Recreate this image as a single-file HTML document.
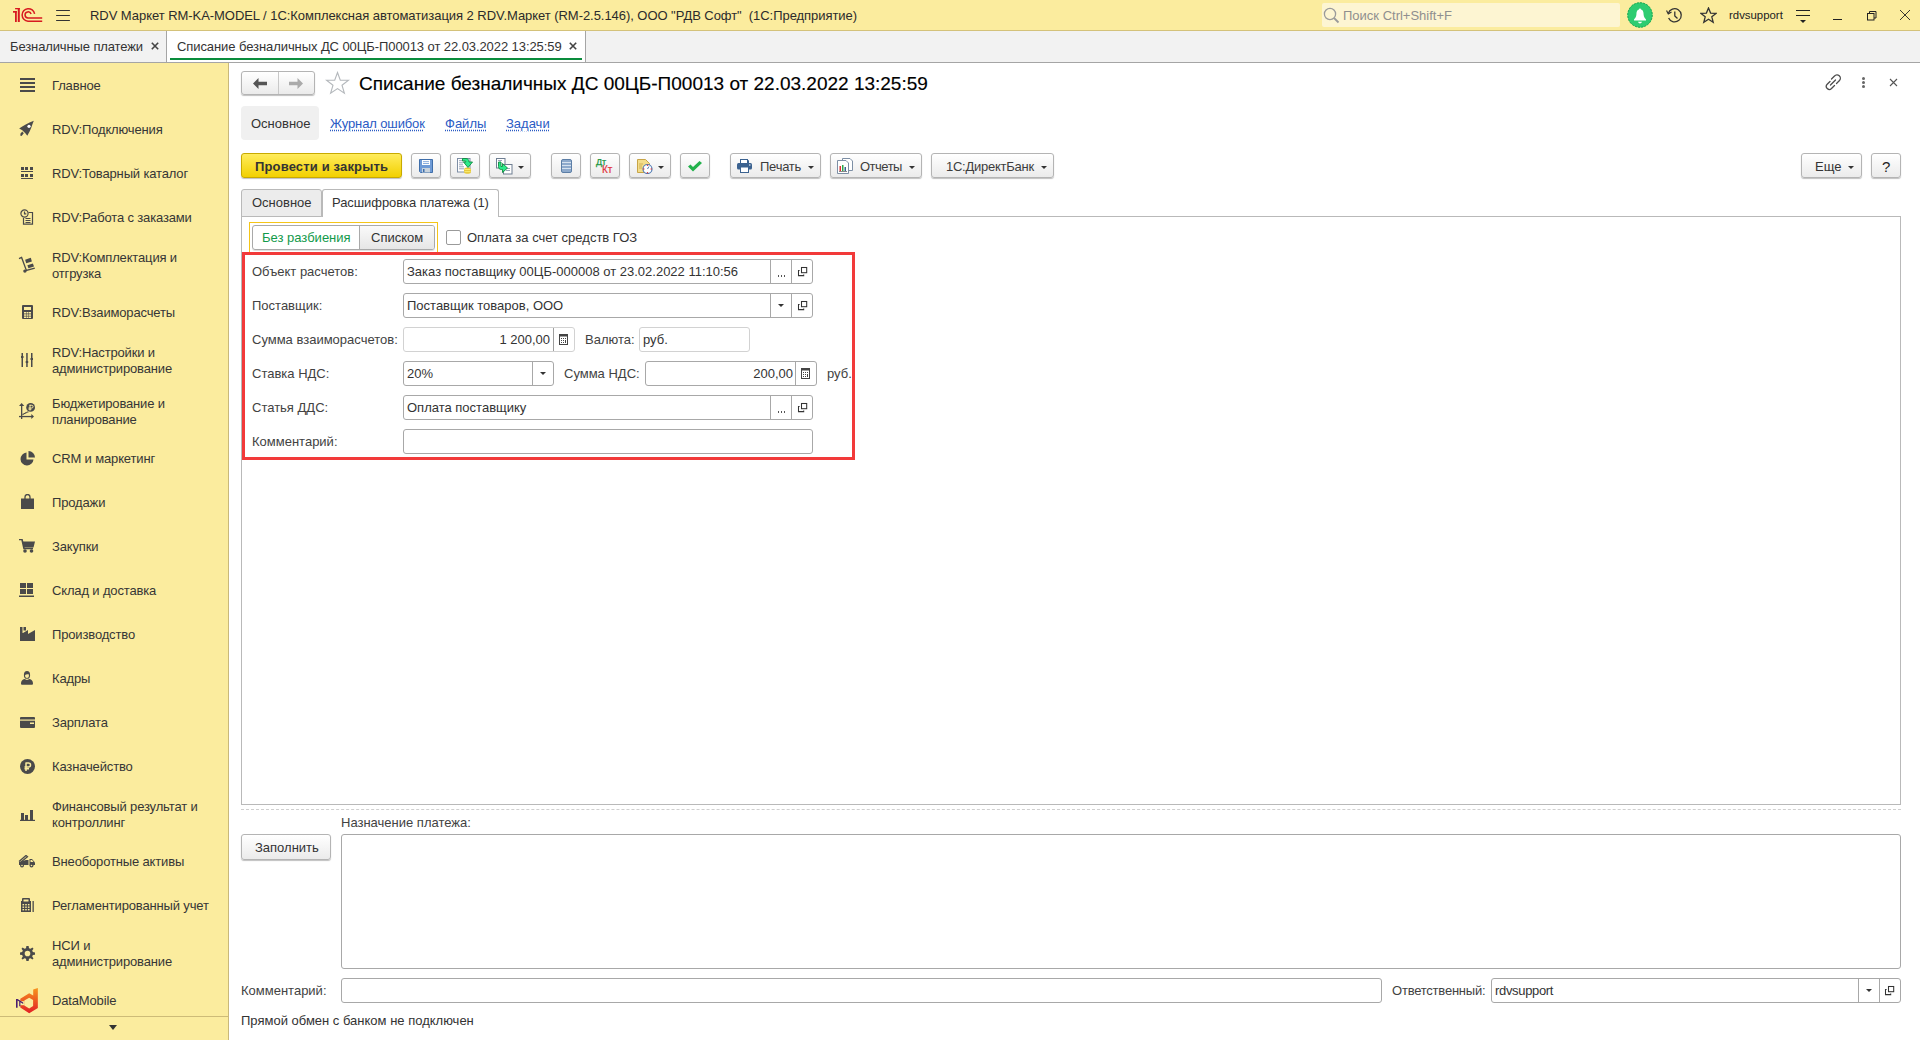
<!DOCTYPE html>
<html><head><meta charset="utf-8">
<style>
*{margin:0;padding:0;box-sizing:border-box}
html,body{width:1920px;height:1040px;overflow:hidden;background:#fff;font-family:"Liberation Sans",sans-serif;font-size:13px;color:#4d4d4d}
.a{position:absolute}
.t{position:absolute;white-space:pre;line-height:16px;font-size:13px}
#hdr{left:0;top:0;width:1920px;height:31px;background:#fbec9e;border-bottom:1px solid #d4c27a}
#tabs{left:0;top:31px;width:1920px;height:32px;background:#f2f2f2;border-bottom:1px solid #a5a5a5}
#side{left:0;top:63px;width:229px;height:977px;background:#fbec9e;border-right:1px solid #c9b87a}
.si{position:absolute;left:52px;white-space:pre;line-height:16px;color:#363636;letter-spacing:-0.15px}
.ic{position:absolute;left:19px;width:17px;height:17px}
.btn{position:absolute;height:26px;border:1px solid #b4b4b4;border-radius:3px;background:linear-gradient(#ffffff,#ebebeb);box-shadow:0 1px 1px rgba(0,0,0,.25)}
.fld{position:absolute;height:25px;border:1px solid #a8a8a8;border-radius:3px;background:#fff}
.lbl{position:absolute;white-space:pre;line-height:16px;color:#424242}
.val{position:absolute;white-space:pre;line-height:16px;color:#333}
.dd{position:absolute;width:0;height:0;border-left:4px solid transparent;border-right:4px solid transparent;border-top:4px solid #4d4d4d}
.lnk{color:#2a5bc4;text-decoration:underline dotted;text-underline-offset:2px}
.ybtn{border:1px solid #c8aa00;border-radius:3px;background:linear-gradient(#ffec5c,#f2d000);box-shadow:0 1px 1px rgba(0,0,0,.25)}
.sep{width:1px;height:23px;background:#a8a8a8}
</style></head><body>

<!-- HEADER -->
<div id="hdr" class="a">
  <svg class="a" style="left:0;top:0" width="50" height="30" viewBox="0 0 50 30"><g fill="#d71920"><rect x="13" y="11" width="3.7" height="1.7"/><rect x="15" y="11" width="1.8" height="11"/><rect x="17.8" y="8" width="2" height="14"/><rect x="15.1" y="8" width="4.7" height="1.3"/></g><g fill="none" stroke="#d71920" stroke-width="1.5"><path d="M34.6 13.8 A6.3 6.3 0 1 0 28 21.25 H42.2"/><path d="M31.1 14 A3.1 3.1 0 1 0 28 18.05 H42.2"/></g></svg>
  <div class="a" style="left:56px;top:10px;width:14px;height:1.2px;background:#333;border-radius:1px"></div>
  <div class="a" style="left:56px;top:15px;width:14px;height:1.2px;background:#333;border-radius:1px"></div>
  <div class="a" style="left:56px;top:20px;width:14px;height:1.2px;background:#333;border-radius:1px"></div>
  <div class="t" style="left:90px;top:8px;color:#2b2b2b;letter-spacing:-0.05px">RDV Маркет RM-KA-MODEL / 1С:Комплексная автоматизация 2 RDV.Маркет (RM-2.5.146), ООО "РДВ Софт"  (1С:Предприятие)</div>
  <div class="a" style="left:1322px;top:3px;width:298px;height:24px;background:#fdf5d2;border-radius:2px"></div>
  <div class="t" style="left:1343px;top:8px;color:#8f8f8f">Поиск Ctrl+Shift+F</div>
  <svg class="a" style="left:1323px;top:7px" width="17" height="17" viewBox="0 0 17 17" fill="none" stroke="#9a9a9a" stroke-width="1.3"><circle cx="7" cy="7" r="5.6"/><path d="M11 11 L15.5 15.5" stroke-width="1.8"/></svg>
  <svg class="a" style="left:1627px;top:2px" width="26" height="26" viewBox="0 0 26 26"><circle cx="13" cy="13" r="12.5" fill="#2ecc71"/><circle cx="13" cy="13" r="12.3" fill="none" stroke="#0f9a44" stroke-width="0.8" stroke-dasharray="2 1.2"/><path d="M13 6.5 A1 1 0 0 1 14 7.6 C16 8 16.6 10 16.6 12.5 C16.6 15 18.5 17 19 17.5 V18.5 H7 V17.5 C7.5 17 9.4 15 9.4 12.5 C9.4 10 10 8 12 7.6 A1 1 0 0 1 13 6.5Z" fill="#fff"/><path d="M11 19.8 H15 C14.6 21 13.8 21.5 13 21.5 C12.2 21.5 11.4 21 11 19.8Z" fill="#fff"/></svg>
  <svg class="a" style="left:1666px;top:7px" width="17" height="17" viewBox="0 0 17 17" fill="none" stroke="#333" stroke-width="1.3"><path d="M2.3 6.5 A6.6 6.6 0 1 1 2.6 11"/><path d="M0.5 3.5 L2.3 7 L5.5 5" stroke-width="1.2"/><path d="M8.8 4.5 V9 L11.5 11.5"/></svg>
  <svg class="a" style="left:1700px;top:7px" width="17" height="17" viewBox="0 0 17 17" fill="none" stroke="#333" stroke-width="1.3" stroke-linejoin="miter"><path d="M8.5 1 L10.6 6.1 L16 6.4 L11.8 9.8 L13.2 15.3 L8.5 12.3 L3.8 15.3 L5.2 9.8 L1 6.4 L6.4 6.1 Z"/></svg>
  <div class="t" style="left:1729px;top:7px;font-size:11.4px;color:#222">rdvsupport</div>
  <svg class="a" style="left:1796px;top:9px" width="15" height="15" viewBox="0 0 15 15" fill="#222"><rect x="0" y="1" width="14" height="1"/><rect x="0" y="6" width="14" height="1"/><path d="M4 11 H10 L7 14Z"/></svg>
  <div class="a" style="left:1833px;top:19px;width:9px;height:1px;background:#222"></div>
  <svg class="a" style="left:1867px;top:11px" width="10" height="10" viewBox="0 0 10 10" fill="none" stroke="#222" stroke-width="1"><rect x="0.5" y="2.5" width="6.5" height="6.5"/><path d="M2.5 2.5 V0.5 H9 V7 H7"/></svg>
  <svg class="a" style="left:1900px;top:10px" width="10" height="10" viewBox="0 0 10 10" stroke="#222" stroke-width="0.9"><path d="M0 0 L10 10 M10 0 L0 10"/></svg>

</div>

<!-- TABS -->
<div id="tabs" class="a">
  <div class="t" style="left:10px;top:8px;color:#333;letter-spacing:-0.12px">Безналичные платежи</div>
  <div class="a" style="left:166px;top:0;width:1px;height:31px;background:#a5a5a5"></div>
  <div class="a" style="left:167px;top:0;width:418px;height:31px;background:#fff"></div>
  <div class="t" style="left:177px;top:8px;color:#333;letter-spacing:-0.08px">Списание безналичных ДС 00ЦБ-П00013 от 22.03.2022 13:25:59</div>
  <div class="a" style="left:170px;top:27px;width:412px;height:2px;background:#0a8c3c"></div>
  <div class="a" style="left:585px;top:0;width:1px;height:31px;background:#a5a5a5"></div>
  <svg class="a" style="left:151px;top:11px" width="8" height="8" viewBox="0 0 8 8" stroke="#444" stroke-width="1.6"><path d="M0.8 0.8 L7.2 7.2 M7.2 0.8 L0.8 7.2"/></svg>
  <svg class="a" style="left:569px;top:11px" width="8" height="8" viewBox="0 0 8 8" stroke="#444" stroke-width="1.6"><path d="M0.8 0.8 L7.2 7.2 M7.2 0.8 L0.8 7.2"/></svg>

</div>

<!-- SIDEBAR -->
<div id="side" class="a">
</div>


<!-- SIDEBAR ITEMS -->
<div class="si" style="top:78px">Главное</div>
<div class="si" style="top:122px">RDV:Подключения</div>
<div class="si" style="top:166px">RDV:Товарный каталог</div>
<div class="si" style="top:210px">RDV:Работа с заказами</div>
<div class="si" style="top:250px">RDV:Комплектация и
отгрузка</div>
<div class="si" style="top:305px">RDV:Взаиморасчеты</div>
<div class="si" style="top:345px">RDV:Настройки и
администрирование</div>
<div class="si" style="top:396px">Бюджетирование и
планирование</div>
<div class="si" style="top:451px">CRM и маркетинг</div>
<div class="si" style="top:495px">Продажи</div>
<div class="si" style="top:539px">Закупки</div>
<div class="si" style="top:583px">Склад и доставка</div>
<div class="si" style="top:627px">Производство</div>
<div class="si" style="top:671px">Кадры</div>
<div class="si" style="top:715px">Зарплата</div>
<div class="si" style="top:759px">Казначейство</div>
<div class="si" style="top:799px">Финансовый результат и
контроллинг</div>
<div class="si" style="top:854px">Внеоборотные активы</div>
<div class="si" style="top:898px">Регламентированный учет</div>
<div class="si" style="top:938px">НСИ и
администрирование</div>
<div class="si" style="top:993px">DataMobile</div>

<!-- sidebar icons -->
<svg class="a" style="left:20px;top:78px" width="15" height="14" viewBox="0 0 15 14" fill="#4a4a4a"><rect x="0" y="0" width="15" height="2"/><rect x="0" y="4" width="15" height="2"/><rect x="0" y="8" width="15" height="2"/><rect x="0" y="12" width="15" height="2"/></svg>
<svg class="a" style="left:14px;top:116px" width="26" height="26" viewBox="0 0 26 26" fill="#4a4a4a"><path d="M19.8 4.8 C18 9 17 14 13.3 19.8 L11.8 17.8 L8.3 14.2 L5.2 12.4 C9 10 14 7 19.8 4.8Z"/><circle cx="15" cy="10.3" r="1.6" fill="#fff"/><path d="M8.2 15.6 L9.8 17.3 L7.6 20 L6.2 19.6 L6.6 17.6Z"/></svg>
<svg class="a" style="left:20px;top:166px" width="14" height="14" viewBox="0 0 14 14" fill="#4a4a4a"><rect x="1" y="1" width="3" height="3"/><rect x="5" y="1" width="3" height="3"/><rect x="10" y="1" width="3" height="3"/><rect x="1" y="5" width="12" height="1"/><rect x="1" y="8" width="3" height="3"/><rect x="5" y="8" width="3" height="3"/><rect x="10" y="8" width="3" height="3"/><rect x="1" y="12" width="12" height="1"/></svg>
<svg class="a" style="left:20px;top:209px" width="14" height="16" viewBox="0 0 14 16" fill="none" stroke="#4a4a4a" stroke-width="1.2"><circle cx="4.5" cy="4.5" r="3.6"/><path d="M4.5 2.5 V4.8 H6.3"/><path d="M8.5 3.5 H12.5 V15.2 H3.5 V9"/><path d="M5.5 9.5 H10.5 M5.5 11.5 H10.5 M5.5 13.5 H10.5"/></svg>
<svg class="a" style="left:14px;top:250px" width="26" height="26" viewBox="0 0 26 26" fill="#4a4a4a"><path d="M5 8.6 L7.6 7.4 L12.4 20.4 L20.8 18.2" fill="none" stroke="#4a4a4a" stroke-width="1.3"/><circle cx="10.9" cy="21.1" r="1.7"/><path d="M11.1 9.8 L16.8 7.8 L17.9 11.6 L12.2 13.3Z"/><path d="M13.4 15.3 L18.9 13.4 L20 16.4 L14.4 18.3Z"/></svg>
<svg class="a" style="left:22px;top:305px" width="11" height="14" viewBox="0 0 11 14" fill="#4a4a4a"><path d="M1 0 H10 A1 1 0 0 1 11 1 V13 A1 1 0 0 1 10 14 H1 A1 1 0 0 1 0 13 V1 A1 1 0 0 1 1 0Z M2 2 V5 H9 V2Z" fill-rule="evenodd"/><g fill="#fbec9e"><rect x="2" y="7" width="2" height="1.5"/><rect x="4.5" y="7" width="2" height="1.5"/><rect x="7" y="7" width="2" height="1.5"/><rect x="2" y="9.3" width="2" height="1.5"/><rect x="4.5" y="9.3" width="2" height="1.5"/><rect x="7" y="9.3" width="2" height="1.5"/><rect x="2" y="11.5" width="2" height="1.5"/><rect x="4.5" y="11.5" width="2" height="1.5"/><rect x="7" y="11.5" width="2" height="1.5"/></g></svg>
<svg class="a" style="left:21px;top:353px" width="12" height="14" viewBox="0 0 12 14" fill="#4a4a4a"><rect x="0.5" y="0" width="1.5" height="14"/><rect x="5.2" y="0" width="1.5" height="14"/><rect x="10" y="0" width="1.5" height="14"/><rect x="0" y="3" width="2.5" height="2"/><rect x="4.7" y="8" width="2.5" height="2"/><rect x="9.5" y="5" width="2.5" height="2"/></svg>
<svg class="a" style="left:14px;top:398px" width="26" height="26" viewBox="0 0 26 26" fill="#4a4a4a"><rect x="7" y="7" width="1.3" height="14"/><path d="M5 7.9 L7.65 5 L10.3 7.9Z"/><rect x="5" y="17.9" width="13" height="1.3"/><path d="M17.3 16 L20 18.55 L17.3 21.1Z"/><circle cx="16.6" cy="9.4" r="4.4"/><path d="M16 6.8 V12.6 M15.6 7.3 H17.7 A1.35 1.35 0 0 1 17.7 10 H14.5 M14.5 11.2 H17.4" stroke="#fbec9e" stroke-width="1" fill="none"/><path d="M8.3 16.3 H9.8 V15.5 H11.3 V14.7 H12.8 V14 H14.5" stroke="#4a4a4a" stroke-width="1" fill="none"/></svg>
<svg class="a" style="left:20px;top:451px" width="15" height="15" viewBox="0 0 15 15" fill="#4a4a4a"><path d="M6.5 1.5 A6.5 6.5 0 1 0 13.5 8.5 H6.5 Z"/><path d="M8.5 0 A6.5 6.5 0 0 1 15 6.5 H8.5 Z"/></svg>
<svg class="a" style="left:21px;top:494px" width="13" height="15" viewBox="0 0 13 15" fill="#4a4a4a"><path d="M0 4.5 H13 V15 H0 Z"/><path d="M4 6 V3 A2.5 2.5 0 0 1 9 3 V6" fill="none" stroke="#4a4a4a" stroke-width="1.3"/></svg>
<svg class="a" style="left:19px;top:539px" width="16" height="14" viewBox="0 0 16 14" fill="#4a4a4a"><path d="M0 0.5 H3 L5 9.5 H14" fill="none" stroke="#4a4a4a" stroke-width="1.6"/><path d="M3.5 2.5 H16 L14.5 8.5 H4.8 Z"/><circle cx="6" cy="12" r="1.8"/><circle cx="12.5" cy="12" r="1.8"/></svg>
<svg class="a" style="left:19px;top:583px" width="15" height="14" viewBox="0 0 15 14" fill="#4a4a4a"><rect x="1" y="0" width="6" height="5"/><rect x="8" y="0" width="6" height="5"/><rect x="1" y="6" width="6" height="5"/><rect x="8" y="6" width="6" height="5"/><rect x="0" y="12.5" width="15" height="1.5"/></svg>
<svg class="a" style="left:20px;top:627px" width="15" height="14" viewBox="0 0 15 14" fill="#4a4a4a"><rect x="0" y="0" width="2.5" height="6"/><rect x="3.5" y="0" width="2.5" height="3.5"/><path d="M0 6 H3 L8 3 V7 L15 3 V14 H0 Z"/></svg>
<svg class="a" style="left:14px;top:664px" width="26" height="26" viewBox="0 0 26 26" fill="#4a4a4a"><ellipse cx="13" cy="10.9" rx="3.1" ry="3.9"/><path d="M11.1 10.9 C12 10.2 13.4 10 14.9 10.4 V12 C14.9 13.3 14 14 13 14 C12 14 11.1 13.3 11.1 12Z" fill="#fbec9e"/><path d="M7 19.5 C7 16.8 8.5 15.6 10.4 15 L13 15.9 L15.6 15 C17.5 15.6 19 16.8 19 19.5 C19 20.4 18.5 20.8 17.8 20.8 H8.2 C7.5 20.8 7 20.4 7 19.5Z"/></svg>
<svg class="a" style="left:20px;top:717px" width="15" height="11" viewBox="0 0 15 11" fill="#4a4a4a"><path d="M1 0 H14 A1 1 0 0 1 15 1 V10 A1 1 0 0 1 14 11 H1 A1 1 0 0 1 0 10 V1 A1 1 0 0 1 1 0Z"/><rect x="0" y="2.5" width="15" height="1.2" fill="#fbec9e"/><rect x="10" y="5.5" width="4" height="1.5" fill="#fbec9e"/></svg>
<svg class="a" style="left:20px;top:759px" width="15" height="15" viewBox="0 0 15 15"><circle cx="7.5" cy="7.5" r="7.5" fill="#4a4a4a"/><path d="M6 3.5 V12 M5.8 4 H8.5 A2 2 0 0 1 8.5 8 H4.5 M4.5 9.8 H9" stroke="#fbec9e" stroke-width="1.5" fill="none"/></svg>
<svg class="a" style="left:20px;top:808px" width="15" height="13" viewBox="0 0 15 13" fill="#4a4a4a"><rect x="1" y="5" width="3" height="7"/><rect x="5" y="7" width="3" height="5"/><rect x="10" y="2" width="3" height="10"/><rect x="0" y="11.8" width="15" height="1.2"/></svg>
<svg class="a" style="left:18px;top:855px" width="17" height="13" viewBox="0 0 17 13" fill="#4a4a4a"><path d="M1 9.5 V7 L8 5 H10.5 L10.5 10 H1 Z"/><path d="M1 6.5 L8 0.5 L9.5 1.8 L3 7" fill="none" stroke="#4a4a4a" stroke-width="1.3"/><path d="M11.5 4 H14 L17 7.5 V10 H11.5 Z"/><circle cx="4" cy="10.5" r="2" fill="#4a4a4a"/><circle cx="13.5" cy="10.5" r="2" fill="#4a4a4a"/><circle cx="4" cy="10.5" r="0.8" fill="#fbec9e"/><circle cx="13.5" cy="10.5" r="0.8" fill="#fbec9e"/><path d="M12.5 5 H14 L15.5 7 H12.5Z" fill="#fbec9e"/></svg>
<svg class="a" style="left:21px;top:898px" width="13" height="14" viewBox="0 0 13 14" fill="#4a4a4a"><path d="M1 3 V1 A1 1 0 0 1 2 0 H8 A1 1 0 0 1 9 1 V3 H10 V14 H0 V3Z"/><rect x="11.5" y="3" width="1.3" height="11"/><g fill="#fbec9e"><rect x="2.5" y="1.5" width="5" height="2"/><rect x="1.5" y="6" width="1.6" height="1.4"/><rect x="4.2" y="6" width="1.6" height="1.4"/><rect x="6.9" y="6" width="1.6" height="1.4"/><rect x="1.5" y="8.5" width="1.6" height="1.4"/><rect x="4.2" y="8.5" width="1.6" height="1.4"/><rect x="6.9" y="8.5" width="1.6" height="1.4"/><rect x="1.5" y="11" width="1.6" height="1.4"/><rect x="4.2" y="11" width="1.6" height="1.4"/><rect x="6.9" y="11" width="1.6" height="1.4"/></g></svg>
<svg class="a" style="left:20px;top:946px" width="15" height="15" viewBox="0 0 16 16"><path fill="#4a4a4a" fill-rule="evenodd" d="M6.8 0 H9.2 L9.6 2.3 L11.3 3 L13.2 1.6 L14.4 2.8 L13 4.7 L13.7 6.4 L16 6.8 V9.2 L13.7 9.6 L13 11.3 L14.4 13.2 L13.2 14.4 L11.3 13 L9.6 13.7 L9.2 16 H6.8 L6.4 13.7 L4.7 13 L2.8 14.4 L1.6 13.2 L3 11.3 L2.3 9.6 L0 9.2 V6.8 L2.3 6.4 L3 4.7 L1.6 2.8 L2.8 1.6 L4.7 3 L6.4 2.3 Z M8 5 A3 3 0 1 0 8 11 A3 3 0 1 0 8 5Z"/></svg>
<svg class="a" style="left:12px;top:984px" width="30" height="32" viewBox="0 0 30 32"><defs><linearGradient id="dmg" x1="0" y1="0" x2="0" y2="1"><stop offset="0" stop-color="#f7941d"/><stop offset="1" stop-color="#e21f26"/></linearGradient></defs><path fill="url(#dmg)" fill-rule="evenodd" d="M8.3 14.8 L17.2 9.2 L21.2 11.5 L21.2 5.6 L25.85 4 L25.85 24 L17.2 29.3 L8.3 23.5 Z M12.3 16.6 L17.2 13.8 L21.1 16 L21.1 22 L17.2 24.4 L12.3 21.6 Z"/><rect x="7.5" y="17.2" width="5" height="4" fill="#fbec9e"/><path d="M4 15 L5.6 15 L11.2 18.6 L11.2 20 L8.4 18.3 L8.4 22.2 L7.2 22.2 L7.2 17.6 L5.6 16.6 L5.6 23.7 L4 23.7 Z" fill="#4b1f6f"/></svg>
<div class="a" style="left:0;top:1016px;width:228px;height:1px;background:#cdbb78"></div>
<div class="a" style="left:109px;top:1025px;width:0;height:0;border-left:4.5px solid transparent;border-right:4.5px solid transparent;border-top:5px solid #333"></div>

<!-- CONTENT -->
<!-- nav buttons -->
<div class="btn" style="left:241px;top:71px;width:74px;height:24px"></div>
<div class="a" style="left:278px;top:72px;width:1px;height:22px;background:#c8c8c8"></div>
<svg class="a" style="left:253px;top:78px" width="14" height="11" viewBox="0 0 14 11"><path d="M0 5.5 L5.5 0 V3.8 H14 V7.2 H5.5 V11 Z" fill="#555"/></svg>
<svg class="a" style="left:289px;top:78px" width="14" height="11" viewBox="0 0 14 11"><path d="M14 5.5 L8.5 0 V3.8 H0 V7.2 H8.5 V11 Z" fill="#aaa"/></svg>
<svg class="a" style="left:325px;top:71px" width="25" height="24" viewBox="0 0 25 24"><path d="M12.5 1.5 L15.3 9.2 L23.5 9.3 L17 14.2 L19.4 22.3 L12.5 17.6 L5.6 22.3 L8 14.2 L1.5 9.3 L9.7 9.2 Z" fill="none" stroke="#b4b8bc" stroke-width="1.1" stroke-linejoin="miter"/></svg>
<div class="t" style="left:359px;top:73px;font-size:19px;line-height:22px;color:#000;-webkit-text-stroke:0.15px #000">Списание безналичных ДС 00ЦБ-П00013 от 22.03.2022 13:25:59</div>
<!-- right icons -->
<svg class="a" style="left:1825px;top:74px" width="17" height="17" viewBox="0 0 17 17" fill="none" stroke="#4d4d4d" stroke-width="1.3" stroke-linecap="round"><path d="M6.5 5 L9.5 2 A2.8 2.8 0 0 1 14.5 6.5 L11.5 9.5"/><path d="M5 7.5 L2.2 10.3 A2.8 2.8 0 0 0 6.5 14.5 L9.5 11.5"/><path d="M5.5 11 L10.5 6"/></svg>
<div class="a" style="left:1862px;top:77px;width:3px;height:3px;border-radius:50%;background:#666"></div>
<div class="a" style="left:1862px;top:81px;width:3px;height:3px;border-radius:50%;background:#666"></div>
<div class="a" style="left:1862px;top:85px;width:3px;height:3px;border-radius:50%;background:#666"></div>
<svg class="a" style="left:1889px;top:78px" width="9" height="9" viewBox="0 0 9 9" stroke="#555" stroke-width="1.1"><path d="M1 1 L8 8 M8 1 L1 8"/></svg>

<!-- nav links -->
<div class="a" style="left:241px;top:106px;width:78px;height:34px;background:#f0f0f0;border-radius:4px"></div>
<div class="t" style="left:251px;top:116px;color:#333">Основное</div>
<div class="t lnk" style="left:330px;top:116px;letter-spacing:-0.12px">Журнал ошибок</div>
<div class="t lnk" style="left:445px;top:116px">Файлы</div>
<div class="t lnk" style="left:506px;top:116px">Задачи</div>

<!-- toolbar -->
<div class="a ybtn" style="left:241px;top:153px;width:161px;height:25px"></div>
<div class="t" style="left:255px;top:159px;font-weight:bold;color:#333;letter-spacing:0.15px">Провести и закрыть</div>
<div class="btn" style="left:411px;top:153px;width:30px;height:25px"></div>
<div class="btn" style="left:450px;top:153px;width:30px;height:25px"></div>
<div class="btn" style="left:489px;top:153px;width:42px;height:25px"></div>
<div class="btn" style="left:551px;top:153px;width:30px;height:25px"></div>
<div class="btn" style="left:590px;top:153px;width:30px;height:25px"></div>
<div class="btn" style="left:629px;top:153px;width:42px;height:25px"></div>
<div class="btn" style="left:680px;top:153px;width:30px;height:25px"></div>
<div class="btn" style="left:730px;top:153px;width:91px;height:25px"></div>
<div class="btn" style="left:830px;top:153px;width:92px;height:25px"></div>
<div class="btn" style="left:931px;top:153px;width:123px;height:25px"></div>
<div class="btn" style="left:1801px;top:153px;width:61px;height:25px"></div>
<div class="btn" style="left:1871px;top:153px;width:30px;height:25px"></div>
<!-- floppy -->
<svg class="a" style="left:419px;top:159px" width="14" height="14" viewBox="0 0 14 14"><path d="M0.5 0.5 H13.5 V13.5 H1.5 L0.5 12.5 Z" fill="#6f9bd6" stroke="#3f6eaa" stroke-width="1"/><rect x="3" y="1" width="8" height="5" fill="#fff"/><rect x="4" y="2.3" width="6" height="0.8" fill="#6f9bd6"/><rect x="4" y="4" width="6" height="0.8" fill="#6f9bd6"/><rect x="3" y="9" width="8" height="4.5" fill="#c9d3dc"/><rect x="4" y="10" width="1.5" height="3" fill="#3f6eaa"/></svg>
<!-- load -->
<svg class="a" style="left:456px;top:157px" width="18" height="18" viewBox="0 0 18 18"><rect x="1.5" y="1.5" width="12.5" height="13.5" fill="#fff" stroke="#7e8ea5"/><path d="M3 3.7 H7 M3 5.8 H7 M3 7.8 H7 M3 9.8 H8 M3 11.8 H8" stroke="#8d9bb0" stroke-width="0.9"/><rect x="8" y="10.5" width="7" height="6.2" rx="2.5" fill="#e8c93c"/><path d="M8.5 12.5 H14.5 M8.5 14.6 H14.5" stroke="#f7f07a" stroke-width="0.9"/><path d="M6.5 1.5 H10 C12 1.5 13 3 13 5 H16.5 L12 10.5 L7.5 5 H10 C10 4.3 9.5 4 9 4 H6.5 Z" fill="#2bea8a" stroke="#118a3e" stroke-width="0.9" stroke-linejoin="round"/></svg>
<!-- copy -->
<svg class="a" style="left:495px;top:157px" width="18" height="18" viewBox="0 0 18 18"><rect x="1.5" y="1.5" width="8.5" height="9.5" fill="#fff" stroke="#6e7e92" stroke-width="1"/><rect x="8.5" y="7.5" width="8.5" height="9.5" fill="#fff" stroke="#6e7e92" stroke-width="1"/><path d="M3 3.5 H7 M11 11.5 H15 M11 13.5 H15" stroke="#8d9bb0" stroke-width="0.9"/><path d="M3.5 5 H6 V9.5 H7.5 V6.5 L12.5 11 L7.5 15.5 V12.5 H6.5 C4.5 12.5 3.5 11.5 3.5 9.5 Z" fill="#2bea8a" stroke="#118a3e" stroke-width="0.9" stroke-linejoin="round"/></svg>
<div class="dd" style="left:518px;top:166px;border-left-width:3px;border-right-width:3px;border-top-width:3px;border-top-color:#333"></div>
<!-- list -->
<svg class="a" style="left:561px;top:159px" width="11" height="14" viewBox="0 0 11 14"><rect x="0.5" y="0.5" width="10" height="13" rx="1.5" fill="#8eaacc" stroke="#5c7ea6"/><path d="M1 3.5 H10 M1 6.5 H10 M1 9.5 H10" stroke="#d6e2ef" stroke-width="1"/></svg>
<!-- Dt Kt -->
<div class="t" style="left:596px;top:157px;font-size:9px;color:#1a9641;line-height:10px;-webkit-text-stroke:0.25px #1a9641">Дт</div>
<div class="t" style="left:602px;top:165px;font-size:10px;color:#e0303a;line-height:10px;-webkit-text-stroke:0.2px #e0303a">Кт</div>
<!-- doc clock -->
<svg class="a" style="left:637px;top:159px" width="16" height="15" viewBox="0 0 16 15"><path d="M0.5 0.5 H8.5 L12.5 4.5 V13.5 H0.5 Z" fill="#f3dd8a" stroke="#c7a447"/><path d="M2 5 H6 M2 7 H5 M2 9 H5" stroke="#c7a447" stroke-width="0.8"/><circle cx="10.5" cy="10" r="4.5" fill="#fff" stroke="#4e79b3" stroke-width="1.2"/><path d="M10.5 10 L12 7.5" stroke="#4e79b3"/><circle cx="10.5" cy="6.2" r="0.7" fill="#e03030"/><circle cx="6.8" cy="10" r="0.7" fill="#e03030"/><circle cx="14.2" cy="10" r="0.7" fill="#e03030"/><circle cx="10.5" cy="13.8" r="0.7" fill="#e03030"/></svg>
<div class="dd" style="left:658px;top:166px;border-left-width:3px;border-right-width:3px;border-top-width:3px;border-top-color:#333"></div>
<!-- check -->
<svg class="a" style="left:688px;top:161px" width="14" height="11" viewBox="0 0 14 11"><path d="M0 5.5 L2.5 3.5 L5 6 L11.5 0 L14 2 L5 10.5 Z" fill="#22b14c"/></svg>
<!-- printer -->
<svg class="a" style="left:737px;top:159px" width="15" height="14" viewBox="0 0 15 14"><rect x="3.5" y="0.5" width="7" height="4" fill="#fff" stroke="#3b6290"/><path d="M10.5 0.5 L11.5 1.5 V4.5" fill="none" stroke="#3b6290"/><rect x="0" y="4" width="15" height="6.5" rx="1.5" fill="#3b6290"/><rect x="3.5" y="8" width="8" height="5.5" fill="#fff" stroke="#3b6290"/><rect x="12" y="5.5" width="1.5" height="1" fill="#fff"/></svg>
<div class="t" style="left:760px;top:159px;color:#3d3d3d;letter-spacing:-0.25px">Печать</div>
<div class="dd" style="left:808px;top:166px;border-left-width:3px;border-right-width:3px;border-top-width:3px;border-top-color:#333"></div>
<!-- reports -->
<svg class="a" style="left:837px;top:158px" width="16" height="16" viewBox="0 0 16 16"><path d="M5.5 0.5 H13 L15.5 3 V12.5 H5.5Z" fill="#fff" stroke="#7d8fa5"/><path d="M0.5 2.5 H9 L11.5 5 V15.5 H0.5Z" fill="#fff" stroke="#7d8fa5"/><rect x="2.5" y="8" width="1.5" height="5" fill="#e03030"/><rect x="5" y="7" width="1.5" height="6" fill="#2ca84a"/><rect x="7.5" y="9" width="1.5" height="4" fill="#3b6290"/><path d="M2 13.5 H10" stroke="#555" stroke-width="0.7"/></svg>
<div class="t" style="left:860px;top:159px;color:#3d3d3d;letter-spacing:-0.5px">Отчеты</div>
<div class="dd" style="left:909px;top:166px;border-left-width:3px;border-right-width:3px;border-top-width:3px;border-top-color:#333"></div>
<div class="t" style="left:946px;top:159px;color:#3d3d3d;letter-spacing:-0.25px">1С:ДиректБанк</div>
<div class="dd" style="left:1041px;top:166px;border-left-width:3px;border-right-width:3px;border-top-width:3px;border-top-color:#333"></div>
<div class="t" style="left:1815px;top:159px;color:#333">Еще</div>
<div class="dd" style="left:1848px;top:166px;border-left-width:3px;border-right-width:3px;border-top-width:3px;border-top-color:#333"></div>
<div class="t" style="left:1882px;top:159px;color:#222;font-size:15px">?</div>

<!-- form tabs -->
<div class="a" style="left:241px;top:216px;width:1660px;height:589px;border:1px solid #b9b9b9"></div>
<div class="a" style="left:241px;top:189px;width:81px;height:28px;background:#ececec;border:1px solid #b9b9b9;border-radius:3px 3px 0 0"></div>
<div class="a" style="left:322px;top:189px;width:177px;height:28px;background:#fff;border:1px solid #b9b9b9;border-bottom:none;border-radius:3px 3px 0 0"></div>
<div class="t" style="left:252px;top:195px;color:#333">Основное</div>
<div class="t" style="left:332px;top:195px;color:#333;letter-spacing:-0.07px">Расшифровка платежа (1)</div>

<!-- toggle group -->
<div class="a" style="left:249px;top:222px;width:189px;height:32px;border:1px solid #f5c518"></div>
<div class="a" style="left:252px;top:225px;width:183px;height:25px;border:1px solid #a9a9a9;border-radius:3px;background:linear-gradient(#fff,#fff);box-shadow:0 1px 0 rgba(0,0,0,.12)"></div>
<div class="a" style="left:359px;top:226px;width:75px;height:23px;background:linear-gradient(#fafafa,#e6e6e6);border-left:1px solid #a9a9a9;border-radius:0 2px 2px 0"></div>
<div class="t" style="left:262px;top:230px;color:#129a4a">Без разбиения</div>
<div class="t" style="left:371px;top:230px;color:#333">Списком</div>
<div class="a" style="left:446px;top:230px;width:15px;height:15px;border:1px solid #9a9a9a;border-radius:2px;background:#fff"></div>
<div class="t" style="left:467px;top:230px;color:#333">Оплата за счет средств ГОЗ</div>

<!-- red box -->
<div class="a" style="left:242px;top:252px;width:613px;height:208px;border:3px solid #f23a3a"></div>

<!-- rows -->
<div class="lbl" style="left:252px;top:264px">Объект расчетов:</div>
<div class="fld" style="left:403px;top:259px;width:410px"></div>
<div class="a sep" style="left:770px;top:260px"></div>
<div class="a sep" style="left:791px;top:260px"></div>
<div class="val" style="left:407px;top:264px">Заказ поставщику 00ЦБ-000008 от 23.02.2022 11:10:56</div>
<div class="a" style="left:777px;top:275px;width:8px;height:2px;background:radial-gradient(circle,#555 0.7px,transparent 0.9px) 0 0/3px 2px"></div>

<div class="lbl" style="left:252px;top:298px">Поставщик:</div>
<div class="fld" style="left:403px;top:293px;width:410px"></div>
<div class="a sep" style="left:770px;top:294px"></div>
<div class="a sep" style="left:791px;top:294px"></div>
<div class="val" style="left:407px;top:298px">Поставщик товаров, ООО</div>
<div class="dd" style="left:778px;top:304px;border-left-width:3px;border-right-width:3px;border-top-width:3px;border-top-color:#333"></div>

<div class="lbl" style="left:252px;top:332px">Сумма взаиморасчетов:</div>
<div class="fld" style="left:403px;top:327px;width:172px;border-color:#d2d2d2"></div>
<div class="a sep" style="left:553px;top:328px;background:#9f9f9f"></div>
<div class="val" style="left:403px;top:332px;width:147px;text-align:right">1 200,00</div>
<div class="lbl" style="left:585px;top:332px">Валюта:</div>
<div class="fld" style="left:639px;top:327px;width:111px;border-color:#d2d2d2"></div>
<div class="val" style="left:643px;top:332px">руб.</div>

<div class="lbl" style="left:252px;top:366px">Ставка НДС:</div>
<div class="fld" style="left:403px;top:361px;width:151px"></div>
<div class="a sep" style="left:532px;top:362px"></div>
<div class="val" style="left:407px;top:366px">20%</div>
<div class="dd" style="left:540px;top:372px;border-left-width:3px;border-right-width:3px;border-top-width:3px;border-top-color:#333"></div>
<div class="lbl" style="left:564px;top:366px">Сумма НДС:</div>
<div class="fld" style="left:645px;top:361px;width:172px"></div>
<div class="a sep" style="left:795px;top:362px"></div>
<div class="val" style="left:645px;top:366px;width:148px;text-align:right">200,00</div>
<div class="lbl" style="left:827px;top:366px">руб.</div>

<div class="lbl" style="left:252px;top:400px">Статья ДДС:</div>
<div class="fld" style="left:403px;top:395px;width:410px"></div>
<div class="a sep" style="left:770px;top:396px"></div>
<div class="a sep" style="left:791px;top:396px"></div>
<div class="val" style="left:407px;top:400px">Оплата поставщику</div>
<div class="a" style="left:777px;top:411px;width:8px;height:2px;background:radial-gradient(circle,#555 0.7px,transparent 0.9px) 0 0/3px 2px"></div>

<div class="lbl" style="left:252px;top:434px">Комментарий:</div>
<div class="fld" style="left:403px;top:429px;width:410px"></div>

<svg class="a" style="left:797px;top:266px" width="11" height="11" viewBox="0 0 11 11" fill="none" stroke="#333" stroke-width="1.05"><rect x="4.5" y="1.5" width="5.2" height="5.2"/><path d="M2.6 4.4 H1.5 V9.6 H6.7 V8.5"/></svg>
<svg class="a" style="left:797px;top:300px" width="11" height="11" viewBox="0 0 11 11" fill="none" stroke="#333" stroke-width="1.05"><rect x="4.5" y="1.5" width="5.2" height="5.2"/><path d="M2.6 4.4 H1.5 V9.6 H6.7 V8.5"/></svg>
<svg class="a" style="left:797px;top:402px" width="11" height="11" viewBox="0 0 11 11" fill="none" stroke="#333" stroke-width="1.05"><rect x="4.5" y="1.5" width="5.2" height="5.2"/><path d="M2.6 4.4 H1.5 V9.6 H6.7 V8.5"/></svg>

<svg class="a" style="left:559px;top:334px" width="9" height="11" viewBox="0 0 9 11"><rect x="0.5" y="0.5" width="8" height="10" fill="none" stroke="#444"/><rect x="1" y="1" width="7" height="1.5" fill="#444"/><g fill="#444"><rect x="2" y="4" width="1" height="1"/><rect x="4" y="4" width="1" height="1"/><rect x="6" y="4" width="1" height="1"/><rect x="2" y="6" width="1" height="1"/><rect x="4" y="6" width="1" height="1"/><rect x="6" y="6" width="1" height="3"/><rect x="2" y="8" width="1" height="1"/><rect x="4" y="8" width="1" height="1"/></g></svg>
<svg class="a" style="left:801px;top:368px" width="9" height="11" viewBox="0 0 9 11"><rect x="0.5" y="0.5" width="8" height="10" fill="none" stroke="#444"/><rect x="1" y="1" width="7" height="1.5" fill="#444"/><g fill="#444"><rect x="2" y="4" width="1" height="1"/><rect x="4" y="4" width="1" height="1"/><rect x="6" y="4" width="1" height="1"/><rect x="2" y="6" width="1" height="1"/><rect x="4" y="6" width="1" height="1"/><rect x="6" y="6" width="1" height="3"/><rect x="2" y="8" width="1" height="1"/><rect x="4" y="8" width="1" height="1"/></g></svg>
<!-- bottom area -->
<div class="a" style="left:241px;top:809px;width:1660px;height:1px;border-top:1px dashed #cfcfcf"></div>
<div class="lbl" style="left:341px;top:815px">Назначение платежа:</div>
<div class="btn" style="left:241px;top:834px;width:90px;height:26px"></div>
<div class="t" style="left:255px;top:840px;color:#333">Заполнить</div>
<div class="fld" style="left:341px;top:834px;width:1560px;height:135px"></div>
<div class="lbl" style="left:241px;top:983px">Комментарий:</div>
<div class="fld" style="left:341px;top:978px;width:1041px"></div>
<div class="lbl" style="left:1392px;top:983px;letter-spacing:-0.22px">Ответственный:</div>
<div class="fld" style="left:1491px;top:978px;width:410px"></div>
<div class="a sep" style="left:1858px;top:979px"></div>
<div class="a sep" style="left:1879px;top:979px"></div>
<div class="val" style="left:1495px;top:983px;letter-spacing:-0.33px">rdvsupport</div>
<svg class="a" style="left:1884px;top:985px" width="11" height="11" viewBox="0 0 11 11" fill="none" stroke="#333" stroke-width="1.05"><rect x="4.5" y="1.5" width="5.2" height="5.2"/><path d="M2.6 4.4 H1.5 V9.6 H6.7 V8.5"/></svg>
<div class="dd" style="left:1866px;top:989px;border-left-width:3px;border-right-width:3px;border-top-width:3px;border-top-color:#333"></div>
<div class="lbl" style="left:241px;top:1013px;color:#333">Прямой обмен с банком не подключен</div>
</body></html>
